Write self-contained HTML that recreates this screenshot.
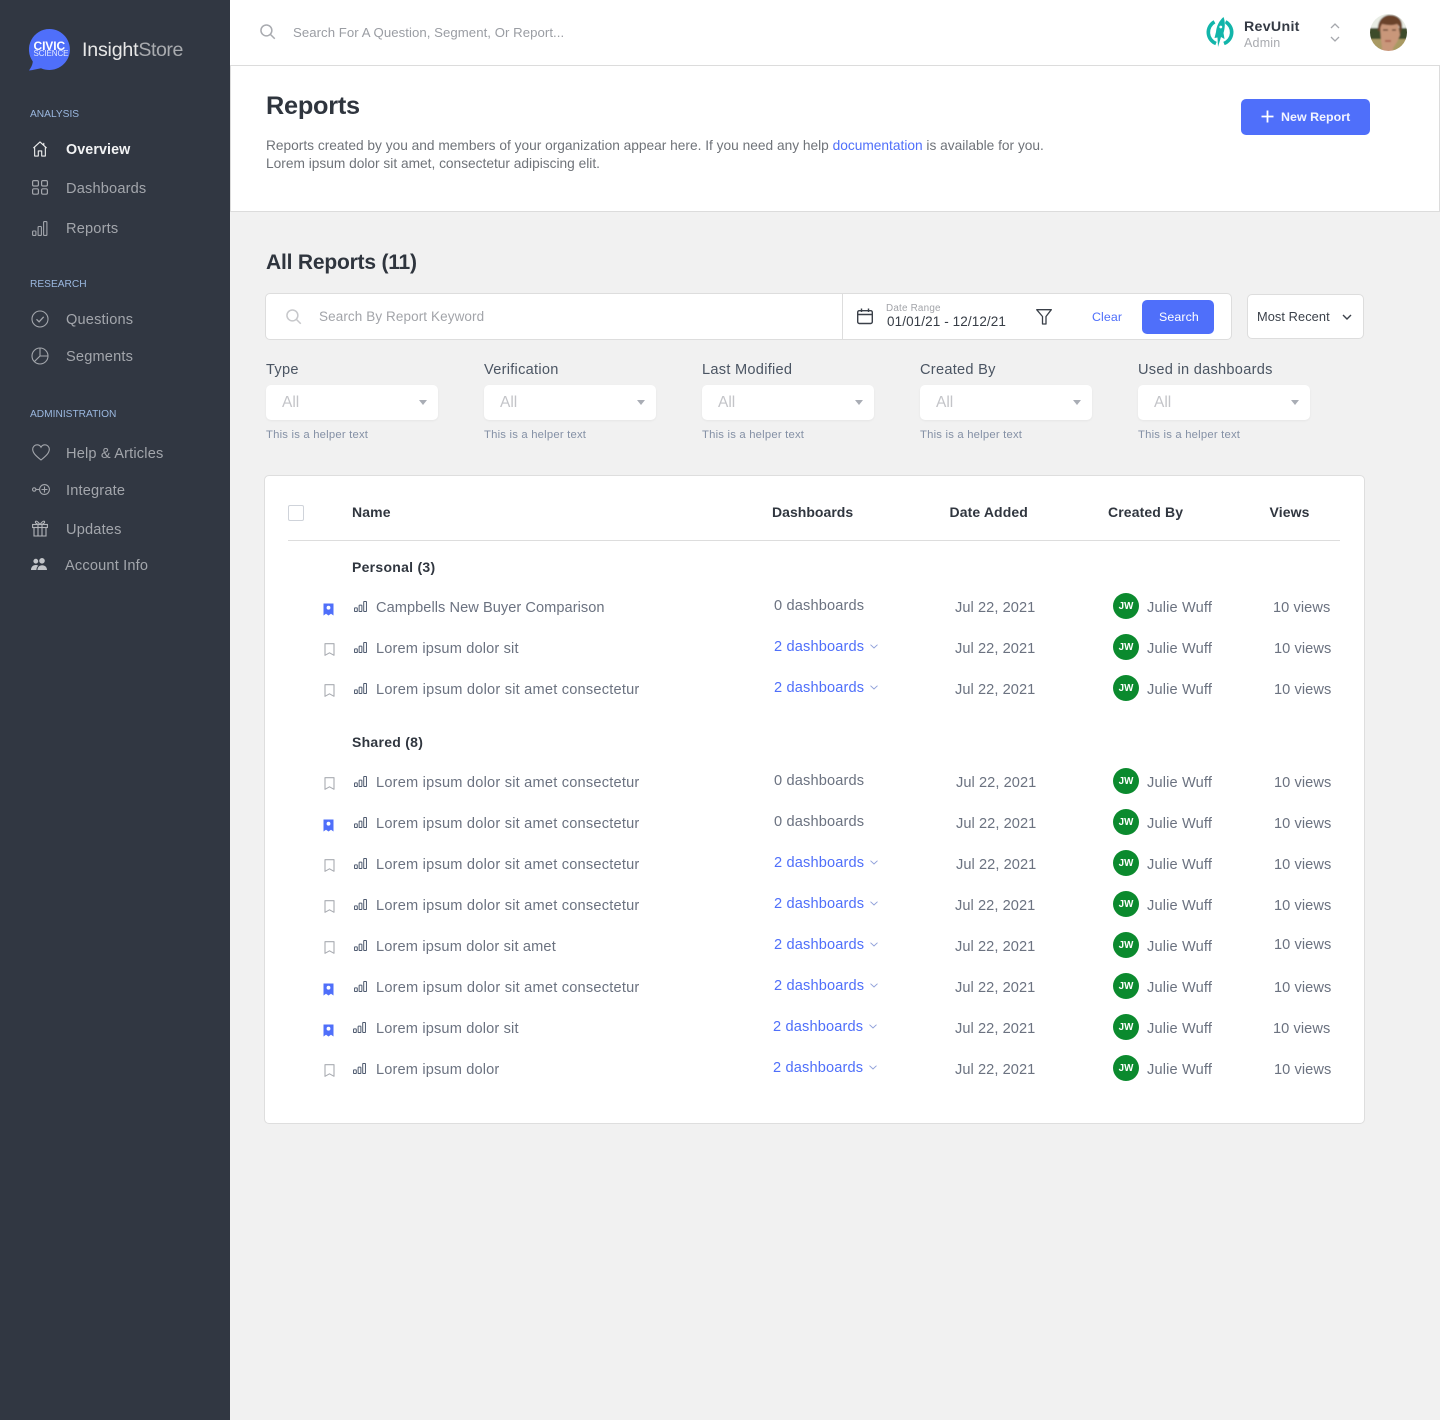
<!DOCTYPE html>
<html><head><meta charset="utf-8"><title>Reports</title>
<style>
html,body{margin:0;padding:0}
body{width:1440px;height:1420px;position:relative;overflow:hidden;background:#f1f1f1;font-family:"Liberation Sans",sans-serif}
.t{position:absolute;white-space:nowrap;line-height:20px;font-size:14.6px;letter-spacing:.15px;color:#6b7280;transform:translateY(1px)}
.ns,.th{transform:none}
svg{position:absolute;overflow:visible}
svg.b{transform:translateY(-1px)}
.box{position:absolute;box-sizing:border-box;background:#fff}
.nav{color:#a3a6ac;letter-spacing:.17px}
.sec{font-size:10.2px;color:#9bb8e0;letter-spacing:0}
.lab{font-size:14.6px;color:#4b5563;letter-spacing:.27px}
.sel{position:absolute;width:172px;height:35px;top:385px;background:#fff;border-radius:5px;box-shadow:0 1px 2px rgba(0,0,0,.05)}
.sel b{position:absolute;right:11px;top:15px;border:4.5px solid transparent;border-top:5px solid #a9adb5;border-bottom:0}
.all{font-size:15.5px;color:#c3c4c8;top:392px;letter-spacing:0}
.hlp{font-size:11.3px;color:#8490a5;top:424px;letter-spacing:.2px}
.th{font-weight:bold;color:#30363f;font-size:14px;letter-spacing:.12px}
.g{letter-spacing:.27px}
.lnk{color:#4f6ffa}
.n{letter-spacing:.21px}
.d{letter-spacing:.07px}
.av{position:absolute;width:26px;height:26px;border-radius:50%;background:#0b8a2e;color:#fff;font-size:9.8px;font-weight:bold;line-height:27px;text-align:center}
</style></head><body>
<svg width="0" height="0" style="position:absolute"><defs>
<symbol id="bar" viewBox="0 0 14 12"><g fill="none" stroke="#4f5b70" stroke-width="1.100"><rect x=".5" y="7.500" width="3" height="4" rx=".6"/><rect x="5.500" y="4.500" width="3" height="7" rx=".6"/><rect x="10.500" y=".5" width="3" height="11" rx=".6"/></g></symbol>
<symbol id="bmk" viewBox="0 0 11 13"><path d="M1 .7h9v11.600l-4.500-2.500L1 12.300z" fill="none" stroke="#a8abb1" stroke-width="1.100" stroke-linejoin="round"/></symbol>
<symbol id="bmf" viewBox="0 0 11 13"><path d="M.5.5h10v12l-2.500-1.800-2.500 1.800-2.500-1.800-2.500 1.800z" fill="#4f6ffa"/><circle cx="5.500" cy="4.700" r="1.900" fill="#fff"/></symbol>
<symbol id="chv" viewBox="0 0 8 5"><path d="M.5.7L4 4 7.500.7" fill="none" stroke="#8e9fd9" stroke-width=".9"/></symbol>
</defs></svg>

<!-- SIDEBAR -->
<div style="position:absolute;left:0;top:0;width:230px;height:1420px;background:#313742"></div>
<svg style="left:29px;top:29px" width="42" height="42" viewBox="0 0 42 42"><path d="M20.500 0a20.500 20.500 0 1 1-8.500 39.200C8 40 4 41 0 41.500c2-3 3.500-5.500 3.800-9A20.500 20.500 0 0 1 20.500 0z" fill="#4f6ffa"/></svg>
<div class="t" style="left:33.500px;top:35px;font-size:12px;font-weight:bold;color:#fff;letter-spacing:-.1px">CIVIC</div>
<div class="t ns" style="left:33.500px;top:44px;font-size:8px;color:#e5eaff;letter-spacing:-.1px">SCIENCE</div>
<div class="t" style="left:82px;top:39px;font-size:19.600px;color:#e8e8e8;letter-spacing:-.2px">Insight<span style="color:#a9abaf;letter-spacing:-.45px">Store</span></div>

<div class="t sec" style="left:30px;top:104px">ANALYSIS</div>
<svg style="left:32px;top:141px" width="16" height="16" viewBox="0 0 16 17" fill="none" stroke="#eceded" stroke-width="1.200" stroke-linejoin="round"><path d="M1 7.500L8 1l7 6.500M2.300 6.500V16h3.900v-5.500h3.600V16h3.900V6.500M12 2v2.500"/></svg>
<div class="t" style="left:66px;top:139px;font-weight:bold;color:#f2f3f4;font-size:14.300px;letter-spacing:.1px">Overview</div>
<svg style="left:32px;top:180px" width="16" height="15" viewBox="0 0 16 15" fill="none" stroke="#a3a6ac" stroke-width="1.200"><rect x=".6" y=".6" width="5.800" height="5.400" rx="1.300"/><rect x="9.600" y=".6" width="5.800" height="5.400" rx="1.300"/><rect x=".6" y="8.800" width="5.800" height="5.400" rx="1.300"/><rect x="9.600" y="8.800" width="5.800" height="5.400" rx="1.300"/></svg>
<div class="t nav" style="left:66px;top:178px">Dashboards</div>
<svg style="left:32px;top:221px" width="16" height="15" viewBox="0 0 16 15" fill="none" stroke="#a3a6ac" stroke-width="1.100"><rect x=".6" y="10" width="3.300" height="4.400" rx=".7"/><rect x="6.100" y="5.500" width="3.300" height="8.900" rx=".7"/><rect x="11.600" y=".6" width="3.300" height="13.800" rx=".7"/></svg>
<div class="t nav" style="left:66px;top:218px">Reports</div>

<div class="t sec" style="left:30px;top:274px">RESEARCH</div>
<svg style="left:31px;top:310px" width="18" height="18" viewBox="0 0 18 18" fill="none" stroke="#a3a6ac" stroke-width="1.100"><circle cx="9" cy="9" r="8"/><path d="M5.500 9.300l2.600 2.500 4.600-5" stroke-width="1.300"/></svg>
<div class="t nav" style="left:66px;top:309px">Questions</div>
<svg style="left:31px;top:347px" width="18" height="18" viewBox="0 0 18 18" fill="none" stroke="#a3a6ac" stroke-width="1.100"><circle cx="9" cy="9" r="8"/><path d="M9 1v8h8M9 9l-5.700 5.700"/></svg>
<div class="t nav" style="left:66px;top:346px">Segments</div>

<div class="t sec" style="left:30px;top:404px">ADMINISTRATION</div>
<svg style="left:32px;top:444px" width="18" height="17" viewBox="0 0 18 17" fill="none" stroke="#a3a6ac" stroke-width="1.100"><path d="M9 16C4 12 .7 9 .7 5.300 .7 2.700 2.700.8 5 .8c1.700 0 3.200.9 4 2.400C9.800 1.700 11.300.8 13 .8c2.300 0 4.300 1.900 4.300 4.500C17.300 9 14 12 9 16z"/></svg>
<div class="t nav" style="left:66px;top:443px">Help &amp; Articles</div>
<svg style="left:32px;top:484px" width="18" height="11" viewBox="0 0 18 11" fill="none" stroke="#a3a6ac" stroke-width="1.100"><circle cx="2.200" cy="5.500" r="1.700"/><path d="M4 5.500h3"/><circle cx="12.500" cy="5.500" r="4.900"/><path d="M12.500 2.500v6M9.500 5.500h6"/></svg>
<div class="t nav" style="left:66px;top:480px">Integrate</div>
<svg style="left:32px;top:520px" width="16" height="17" viewBox="0 0 16 17" fill="none" stroke="#b3b5ba" stroke-width="1.100"><rect x=".6" y="4.500" width="14.800" height="3"/><path d="M2 7.500V16h12V7.500M6 4.500V16M10 4.500V16M8 4.500C6.500 2.500 5 .6 3.800 1.200 2.600 2 4 4.500 8 4.500c4 0 5.400-2.500 4.200-3.300C11 .6 9.500 2.500 8 4.500z"/></svg>
<div class="t nav" style="left:66px;top:519px">Updates</div>
<svg style="left:31px;top:558px" width="16" height="13" viewBox="0 0 16 13" fill="#c3c5c9"><circle cx="4.800" cy="3.200" r="2.400"/><circle cx="11" cy="2.800" r="2.800"/><path d="M0 12c0-3 2-5 4.800-5 1 0 1.800.3 2.500.7C6 8.800 5.400 10.300 5.400 12zM6.500 12c0-2.800 2-4.700 4.700-4.700S16 9.200 16 12z"/></svg>
<div class="t nav" style="left:65px;top:555px">Account Info</div>

<!-- TOP BAR -->
<div class="box" style="left:230px;top:0;width:1210px;height:66px;border-bottom:1px solid #dcdcdc"></div>
<svg style="left:260px;top:24px" width="16" height="16" viewBox="0 0 17 17" fill="none" stroke="#a9abb0" stroke-width="1.600"><circle cx="6.800" cy="6.800" r="5.800"/><path d="M11 11l4.700 4.700"/></svg>
<div class="t" style="left:293px;top:22px;font-size:13.200px;color:#9a9da3;letter-spacing:.05px">Search For A Question, Segment, Or Report...</div>
<svg style="left:1205px;top:16px" width="30" height="32" viewBox="0 0 30 32"><path d="M9.500 5.800A12 12 0 0 0 11 27.500M20.500 5.800A12 12 0 0 1 19 27.500" fill="none" stroke="#12b5aa" stroke-width="3.600"/><path d="M18.500 1C20.500 6 20 12 18.500 17L19.500 23 16 21 13 31 12.500 21.500 9.500 22 11 16C11.500 10 14 5 18.500 1z" fill="#12b5aa" stroke="#fff" stroke-width=".8" paint-order="stroke"/><circle cx="15.800" cy="11" r="1.400" fill="#fff"/></svg>
<div class="t" style="left:1244px;top:16px;font-size:14.200px;font-weight:bold;color:#343a44;letter-spacing:.3px">RevUnit</div>
<div class="t ns" style="left:1244px;top:33px;font-size:12.500px;color:#a9abb0;letter-spacing:.2px">Admin</div>
<svg style="left:1330px;top:23px" width="10" height="20" viewBox="0 0 10 20" fill="none" stroke="#a6a8ad" stroke-width="1.300"><path d="M1 5l4-4 4 4M1 14l4 4 4-4"/></svg>
<svg style="left:1370px;top:14px" width="37" height="37" viewBox="0 0 37 37"><defs><clipPath id="c"><circle cx="18.500" cy="18.500" r="18.500"/></clipPath><filter id="bl"><feGaussianBlur stdDeviation=".8"/></filter></defs><g clip-path="url(#c)"><g filter="url(#bl)"><rect x="-2" y="-2" width="41" height="41" fill="#e8ece4"/><rect x="-2" y="14" width="41" height="13" fill="#3e4c2c"/><rect x="-2" y="25" width="41" height="14" fill="#a99a63"/><path d="M10 10h18l2 11-3 7-4 6v4H12v-5l-1-7z" fill="#c9977a"/><path d="M8 17C7 7 13 1 20 1c7 0 13 4 12 13l-2 6c0-5-1-9-3-10-5 2-11 1-15 0-1 2-2 4-2 7z" fill="#6b432c"/><path d="M13 16h5M22 16h4" stroke="#5a3a2a" stroke-width="1.300"/><path d="M15 27h6" stroke="#a5584a" stroke-width="1.600"/></g></g></svg>

<!-- HEADER PANEL -->
<div class="box" style="left:230px;top:65px;width:1210px;height:147px;border:1px solid #dcdcdc"></div>
<div class="t ns" style="left:266px;top:93px;line-height:26px;font-size:25.300px;font-weight:bold;color:#2f353e;letter-spacing:-.25px">Reports</div>
<div class="t" style="left:266px;top:135px;font-size:13.730px;color:#6f7379;letter-spacing:0">Reports created by you and members of your organization appear here. If you need any help <span class="lnk">documentation</span> is available for you.</div>
<div class="t" style="left:266px;top:153px;font-size:13.730px;color:#6f7379;letter-spacing:0">Lorem ipsum dolor sit amet, consectetur adipiscing elit.</div>
<div style="position:absolute;left:1241px;top:99px;width:129px;height:36px;background:#4f6ffa;border-radius:5px"></div>
<svg style="left:1261px;top:110px" width="13" height="13" viewBox="0 0 13 13"><path d="M6.500 .5v12M.5 6.500h12" stroke="#fff" stroke-width="1.800"/></svg>
<div class="t ns" style="left:1281px;top:107px;font-size:12.400px;font-weight:bold;color:#f2f4ff;letter-spacing:.05px">New Report</div>

<!-- FILTERS -->
<div class="t" style="left:266px;top:249px;line-height:26px;font-size:21px;font-weight:bold;color:#2f353e;letter-spacing:-.2px">All Reports (11)</div>
<div class="box" style="left:265px;top:293px;width:967px;height:47px;border:1px solid #dddddd;border-radius:5px"></div>
<div style="position:absolute;left:842px;top:294px;width:1px;height:45px;background:#dddddd"></div>
<svg style="left:286px;top:309px" width="16" height="16" viewBox="0 0 17 17" fill="none" stroke="#c7c8cb" stroke-width="1.600"><circle cx="6.800" cy="6.800" r="5.800"/><path d="M11 11l4.700 4.700"/></svg>
<div class="t" style="left:319px;top:306px;font-size:13.500px;color:#a2a4a9;letter-spacing:.1px">Search By Report Keyword</div>
<svg style="left:857px;top:308px" width="16" height="17" viewBox="0 0 16 17" fill="none" stroke="#3a4049" stroke-width="1.400"><rect x=".7" y="2.700" width="14.600" height="12.800" rx="1.600"/><path d="M.7 6.500h14.600M4.500.5v3.500M11.500.5v3.500"/></svg>
<div class="t" style="left:886px;top:298px;font-size:9.900px;color:#a2a4a9;letter-spacing:.2px">Date Range</div>
<div class="t" style="left:887px;top:311px;font-size:13.500px;color:#373d46;letter-spacing:.1px">01/01/21 - 12/12/21</div>
<svg style="left:1036px;top:309px" width="16" height="16" viewBox="0 0 16 16" fill="none" stroke="#3a4049" stroke-width="1.300" stroke-linejoin="round"><path d="M.7.700h14.600L10 7.500v7.500H6.500V7.500z"/></svg>
<div class="t lnk ns" style="left:1092px;top:307px;font-size:12.400px;letter-spacing:.1px">Clear</div>
<div style="position:absolute;left:1142px;top:300px;width:72px;height:34px;background:#4f6ffa;border-radius:5px"></div>
<div class="t ns" style="left:1159px;top:307px;font-size:12.400px;color:#fff;letter-spacing:.1px">Search</div>
<div class="box" style="left:1247px;top:294px;width:117px;height:45px;border:1px solid #dddddd;border-radius:5px"></div>
<div class="t ns" style="left:1257px;top:307px;font-size:12.800px;color:#3b414a;letter-spacing:.08px">Most Recent</div>
<svg style="left:1342px;top:314px" width="10" height="7" viewBox="0 0 10 7" fill="none" stroke="#3b414a" stroke-width="1.400"><path d="M1 1l4 4 4-4"/></svg>

<div class="t lab" style="left:266px;top:359px">Type</div>
<div class="t lab" style="left:484px;top:359px">Verification</div>
<div class="t lab" style="left:702px;top:359px">Last Modified</div>
<div class="t lab" style="left:920px;top:359px">Created By</div>
<div class="t lab" style="left:1138px;top:359px">Used in dashboards</div>
<div class="sel" style="left:266px"><b></b></div>
<div class="sel" style="left:484px"><b></b></div>
<div class="sel" style="left:702px"><b></b></div>
<div class="sel" style="left:920px"><b></b></div>
<div class="sel" style="left:1138px"><b></b></div>
<div class="t all" style="left:282px">All</div>
<div class="t all" style="left:500px">All</div>
<div class="t all" style="left:718px">All</div>
<div class="t all" style="left:936px">All</div>
<div class="t all" style="left:1154px">All</div>
<div class="t hlp" style="left:266px">This is a helper text</div>
<div class="t hlp" style="left:484px">This is a helper text</div>
<div class="t hlp" style="left:702px">This is a helper text</div>
<div class="t hlp" style="left:920px">This is a helper text</div>
<div class="t hlp" style="left:1138px">This is a helper text</div>

<!-- TABLE -->
<div class="box" style="left:264px;top:475px;width:1101px;height:649px;border:1px solid #dedede;border-radius:5px"></div>
<div class="box" style="left:288px;top:505px;width:16px;height:16px;border:1.500px solid #cfd3da;border-radius:2px"></div>
<div class="t th" style="left:352px;top:502px">Name</div>
<div class="t th" style="left:772px;top:502px;letter-spacing:.03px">Dashboards</div>
<div class="t th" style="left:949.500px;top:502px">Date Added</div>
<div class="t th" style="left:1108px;top:502px">Created By</div>
<div class="t th" style="left:1269.500px;top:502px">Views</div>
<div style="position:absolute;left:288px;top:540px;width:1052px;height:1px;background:#dddddd"></div>
<div class="t th g" style="left:352px;top:557px">Personal (3)</div>
<div class="t th g" style="left:352px;top:732px">Shared (8)</div>

<!-- row 607 -->
<svg style="left:323px;top:603px" width="11" height="13"><use href="#bmf"/></svg><svg class="b" style="left:354px;top:602px" width="13" height="11"><use href="#bar"/></svg>
<div class="t" style="left:376px;top:597px;letter-spacing:.05px">Campbells New Buyer Comparison</div><div class="t" style="left:774px;top:595px">0 dashboards</div><div class="t d" style="left:955px;top:597px">Jul 22, 2021</div><div class="av" style="left:1113px;top:593px">JW</div><div class="t" style="left:1147px;top:597px">Julie Wuff</div><div class="t d" style="left:1273px;top:597px">10 views</div>
<!-- row 648 -->
<svg style="left:323.500px;top:643px" width="11" height="13"><use href="#bmk"/></svg><svg class="b" style="left:354px;top:643px" width="13" height="11"><use href="#bar"/></svg>
<div class="t" style="left:376px;top:638px">Lorem ipsum dolor sit</div><div class="t lnk" style="left:774px;top:636px">2 dashboards</div><svg style="left:870px;top:644px" width="8" height="5"><use href="#chv"/></svg><div class="t d" style="left:955px;top:638px">Jul 22, 2021</div><div class="av" style="left:1113px;top:634px">JW</div><div class="t" style="left:1147px;top:638px">Julie Wuff</div><div class="t d" style="left:1274px;top:638px">10 views</div>
<!-- row 689 -->
<svg style="left:323.500px;top:684px" width="11" height="13"><use href="#bmk"/></svg><svg class="b" style="left:354px;top:684px" width="13" height="11"><use href="#bar"/></svg>
<div class="t n" style="left:376px;top:679px">Lorem ipsum dolor sit amet consectetur</div><div class="t lnk" style="left:774px;top:677px">2 dashboards</div><svg style="left:870px;top:685px" width="8" height="5"><use href="#chv"/></svg><div class="t d" style="left:955px;top:679px">Jul 22, 2021</div><div class="av" style="left:1113px;top:675px">JW</div><div class="t" style="left:1147px;top:679px">Julie Wuff</div><div class="t d" style="left:1274px;top:679px">10 views</div>
<!-- row 782 -->
<svg style="left:323.500px;top:777px" width="11" height="13"><use href="#bmk"/></svg><svg class="b" style="left:354px;top:777px" width="13" height="11"><use href="#bar"/></svg>
<div class="t n" style="left:376px;top:772px">Lorem ipsum dolor sit amet consectetur</div><div class="t" style="left:774px;top:770px">0 dashboards</div><div class="t d" style="left:956px;top:772px">Jul 22, 2021</div><div class="av" style="left:1113px;top:768px">JW</div><div class="t" style="left:1147px;top:772px">Julie Wuff</div><div class="t d" style="left:1274px;top:772px">10 views</div>
<!-- row 823 -->
<svg style="left:323px;top:819px" width="11" height="13"><use href="#bmf"/></svg><svg class="b" style="left:354px;top:818px" width="13" height="11"><use href="#bar"/></svg>
<div class="t n" style="left:376px;top:813px">Lorem ipsum dolor sit amet consectetur</div><div class="t" style="left:774px;top:811px">0 dashboards</div><div class="t d" style="left:956px;top:813px">Jul 22, 2021</div><div class="av" style="left:1113px;top:809px">JW</div><div class="t" style="left:1147px;top:813px">Julie Wuff</div><div class="t d" style="left:1274px;top:813px">10 views</div>
<!-- row 864 -->
<svg style="left:323.500px;top:859px" width="11" height="13"><use href="#bmk"/></svg><svg class="b" style="left:354px;top:859px" width="13" height="11"><use href="#bar"/></svg>
<div class="t n" style="left:376px;top:854px">Lorem ipsum dolor sit amet consectetur</div><div class="t lnk" style="left:774px;top:852px">2 dashboards</div><svg style="left:870px;top:860px" width="8" height="5"><use href="#chv"/></svg><div class="t d" style="left:956px;top:854px">Jul 22, 2021</div><div class="av" style="left:1113px;top:850px">JW</div><div class="t" style="left:1147px;top:854px">Julie Wuff</div><div class="t d" style="left:1274px;top:854px">10 views</div>
<!-- row 905 -->
<svg style="left:323.500px;top:900px" width="11" height="13"><use href="#bmk"/></svg><svg class="b" style="left:354px;top:900px" width="13" height="11"><use href="#bar"/></svg>
<div class="t n" style="left:376px;top:895px">Lorem ipsum dolor sit amet consectetur</div><div class="t lnk" style="left:774px;top:893px">2 dashboards</div><svg style="left:870px;top:901px" width="8" height="5"><use href="#chv"/></svg><div class="t d" style="left:955px;top:895px">Jul 22, 2021</div><div class="av" style="left:1113px;top:891px">JW</div><div class="t" style="left:1147px;top:895px">Julie Wuff</div><div class="t d" style="left:1274px;top:895px">10 views</div>
<!-- row 946 -->
<svg style="left:323.500px;top:941px" width="11" height="13"><use href="#bmk"/></svg><svg class="b" style="left:354px;top:941px" width="13" height="11"><use href="#bar"/></svg>
<div class="t" style="left:376px;top:936px">Lorem ipsum dolor sit amet</div><div class="t lnk" style="left:774px;top:934px">2 dashboards</div><svg style="left:870px;top:942px" width="8" height="5"><use href="#chv"/></svg><div class="t d" style="left:955px;top:936px">Jul 22, 2021</div><div class="av" style="left:1113px;top:932px">JW</div><div class="t" style="left:1147px;top:936px">Julie Wuff</div><div class="t d" style="left:1274px;top:934px">10 views</div>
<!-- row 987 -->
<svg style="left:323px;top:983px" width="11" height="13"><use href="#bmf"/></svg><svg class="b" style="left:354px;top:982px" width="13" height="11"><use href="#bar"/></svg>
<div class="t n" style="left:376px;top:977px">Lorem ipsum dolor sit amet consectetur</div><div class="t lnk" style="left:774px;top:975px">2 dashboards</div><svg style="left:870px;top:983px" width="8" height="5"><use href="#chv"/></svg><div class="t d" style="left:955px;top:977px">Jul 22, 2021</div><div class="av" style="left:1113px;top:973px">JW</div><div class="t" style="left:1147px;top:977px">Julie Wuff</div><div class="t d" style="left:1274px;top:977px">10 views</div>
<!-- row 1028 -->
<svg style="left:323px;top:1024px" width="11" height="13"><use href="#bmf"/></svg><svg class="b" style="left:353px;top:1023px" width="13" height="11"><use href="#bar"/></svg>
<div class="t" style="left:376px;top:1018px">Lorem ipsum dolor sit</div><div class="t lnk" style="left:773px;top:1016px">2 dashboards</div><svg style="left:869px;top:1024px" width="8" height="5"><use href="#chv"/></svg><div class="t d" style="left:955px;top:1018px">Jul 22, 2021</div><div class="av" style="left:1113px;top:1014px">JW</div><div class="t" style="left:1147px;top:1018px">Julie Wuff</div><div class="t d" style="left:1273px;top:1018px">10 views</div>
<!-- row 1069 -->
<svg style="left:323.500px;top:1064px" width="11" height="13"><use href="#bmk"/></svg><svg class="b" style="left:353px;top:1064px" width="13" height="11"><use href="#bar"/></svg>
<div class="t" style="left:376px;top:1059px">Lorem ipsum dolor</div><div class="t lnk" style="left:773px;top:1057px">2 dashboards</div><svg style="left:869px;top:1065px" width="8" height="5"><use href="#chv"/></svg><div class="t d" style="left:955px;top:1059px">Jul 22, 2021</div><div class="av" style="left:1113px;top:1055px">JW</div><div class="t" style="left:1147px;top:1059px">Julie Wuff</div><div class="t d" style="left:1274px;top:1059px">10 views</div>
</body></html>
